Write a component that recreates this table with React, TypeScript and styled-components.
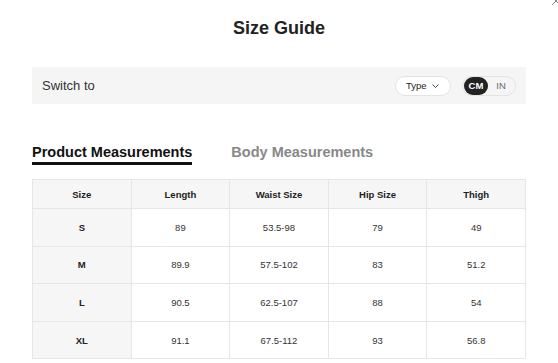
import React from "react";
import styled, { createGlobalStyle } from "styled-components";

const Global = createGlobalStyle`
  html, body { margin: 0; padding: 0; background: #fff; }
  body { font-family: "Liberation Sans", Arial, sans-serif; color: #222; overflow: hidden; }
`;

const Page = styled.div`
  position: relative;
  width: 558px;
  height: 363px;
  box-sizing: border-box;
  padding: 17px 32px 0;
  overflow: hidden;
`;

const Close = styled.svg`
  position: absolute;
  top: -4px;
  right: -3px;
  width: 10px;
  height: 10px;
`;

const Title = styled.h1`
  margin: 0;
  font-size: 18px;
  line-height: 22px;
  font-weight: 700;
  text-align: center;
  color: #222;
`;

const Bar = styled.div`
  margin-top: 28px;
  height: 37px;
  background: #f5f5f5;
  display: flex;
  align-items: center;
  justify-content: space-between;
  padding: 0 10px;
`;

const BarLabel = styled.span`
  font-size: 13px;
  color: #333;
`;

const Controls = styled.div`
  display: flex;
  align-items: center;
  gap: 11px;
`;

const TypeButton = styled.button`
  display: flex;
  align-items: center;
  gap: 5px;
  height: 20px;
  width: 56px;
  box-sizing: border-box;
  padding: 0 0 0 10px;
  border: 1px solid #e3e3e3;
  border-radius: 10px;
  background: #fff;
  font-family: inherit;
  font-size: 9.5px;
  color: #222;
`;

const Toggle = styled.div`
  display: flex;
  align-items: center;
  height: 20px;
  width: 54px;
  box-sizing: border-box;
  padding: 0 1px;
  border: 1px solid #e3e3e3;
  border-radius: 10px;
`;

const Seg = styled.span<{ $active?: boolean }>`
  display: flex;
  align-items: center;
  justify-content: center;
  height: 18px;
  width: ${(p) => (p.$active ? "24px" : "26px")};
  border-radius: 9px;
  font-size: 9.5px;
  font-weight: ${(p) => (p.$active ? 700 : 400)};
  background: ${(p) => (p.$active ? "#222" : "transparent")};
  color: ${(p) => (p.$active ? "#fff" : "#666")};
`;

const Tabs = styled.div`
  margin-top: 40px;
  display: flex;
  gap: 39px;
`;

const Tab = styled.div<{ $active?: boolean }>`
  font-size: 14.5px;
  line-height: 17px;
  font-weight: 700;
  padding-bottom: 1px;
  color: ${(p) => (p.$active ? "#111" : "#888")};
  border-bottom: 3px solid ${(p) => (p.$active ? "#111" : "transparent")};
`;

const Table = styled.table`
  margin-top: 14px;
  width: 494px;
  border-collapse: collapse;
  table-layout: fixed;
  font-size: 9.5px;
`;

const Th = styled.th`
  height: 28px;
  padding: 0;
  border: 1px solid #e6e6e6;
  background: #f6f6f6;
  font-weight: 700;
  color: #222;
  text-align: center;
`;

const Td = styled.td<{ $head?: boolean }>`
  height: 36.6px;
  padding: 0;
  border: 1px solid #e6e6e6;
  text-align: center;
  background: ${(p) => (p.$head ? "#f6f6f6" : "#fff")};
  font-weight: ${(p) => (p.$head ? 700 : 400)};
  color: ${(p) => (p.$head ? "#222" : "#333")};
`;

const headers = ["Size", "Length", "Waist Size", "Hip Size", "Thigh"];
const rows = [
  ["S", "89", "53.5-98", "79", "49"],
  ["M", "89.9", "57.5-102", "83", "51.2"],
  ["L", "90.5", "62.5-107", "88", "54"],
  ["XL", "91.1", "67.5-112", "93", "56.8"],
];

export default function App() {
  return (
    <>
      <Global />
      <Page>
        <Close viewBox="0 0 10 10">
          <path d="M1 1L9 9M9 1L1 9" stroke="#888" strokeWidth="1" fill="none" />
        </Close>
        <Title>Size Guide</Title>
        <Bar>
          <BarLabel>Switch to</BarLabel>
          <Controls>
            <TypeButton>
              Type
              <svg width="7" height="4" viewBox="0 0 7 4">
                <path d="M0.5 0.5L3.5 3.5L6.5 0.5" stroke="#333" strokeWidth="0.9" fill="none" />
              </svg>
            </TypeButton>
            <Toggle>
              <Seg $active>CM</Seg>
              <Seg>IN</Seg>
            </Toggle>
          </Controls>
        </Bar>
        <Tabs>
          <Tab $active>Product Measurements</Tab>
          <Tab>Body Measurements</Tab>
        </Tabs>
        <Table>
          <thead>
            <tr>
              {headers.map((h) => (
                <Th key={h}>{h}</Th>
              ))}
            </tr>
          </thead>
          <tbody>
            {rows.map((r) => (
              <tr key={r[0]}>
                {r.map((c, i) => (
                  <Td key={i} $head={i === 0}>
                    {c}
                  </Td>
                ))}
              </tr>
            ))}
          </tbody>
        </Table>
      </Page>
    </>
  );
}
